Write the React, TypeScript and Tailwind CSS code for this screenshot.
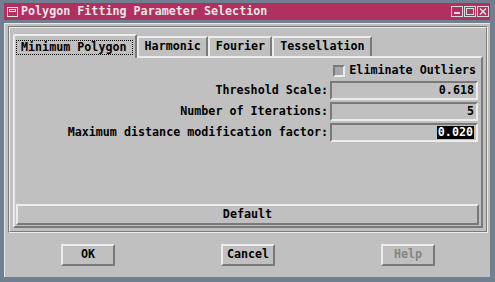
import React from 'react';

const raised = 'border-2 border-t-[#ececec] border-l-[#ececec] border-b-[#7a7a7a] border-r-[#7a7a7a]';
const sunken = 'border-2 border-t-[#7a7a7a] border-l-[#7a7a7a] border-b-[#ececec] border-r-[#ececec]';

const WinIcon = () => (
  <svg width="11" height="10" viewBox="0 0 11 10" className="shrink-0">
    <rect x="0.5" y="0.5" width="10" height="9" fill="none" stroke="#e4e4e4" />
    <rect x="2.5" y="2.5" width="6" height="2" fill="none" stroke="#e4e4e4" />
  </svg>
);

const TitleButton = ({ kind }: { kind: 'min' | 'max' | 'close' }) => (
  <svg width="12" height="11" viewBox="0 0 12 11">
    <rect x="0.5" y="0.5" width="11" height="10" fill="none" stroke="#dcdcdc" />
    {kind === 'min' && <rect x="3" y="6" width="6" height="2" fill="#dcdcdc" />}
    {kind === 'max' && <rect x="2.5" y="2.5" width="7" height="6" fill="none" stroke="#dcdcdc" strokeWidth="1" />}
    {kind === 'close' && (
      <path d="M3 2.5 L9 8.5 M9 2.5 L3 8.5" stroke="#dcdcdc" strokeWidth="1.6" />
    )}
  </svg>
);

const tabs = ['Minimum Polygon', 'Harmonic', 'Fourier', 'Tessellation'];

const rows = [
  { label: 'Threshold Scale:', value: '0.618' },
  { label: 'Number of Iterations:', value: '5' },
  { label: 'Maximum distance modification factor:', value: '0.020', selected: true },
];

export default function App() {
  return (
    <div className="w-[495px] h-[282px] bg-[#708090] pt-[3px] pl-[4px] pr-[5px] pb-[5px] flex flex-col font-['DejaVu_Sans_Mono','Liberation_Mono',monospace] text-[11.7px] font-bold leading-none text-black">
      {/* title bar */}
      <div className="h-[17px] bg-[#b03060] flex items-center pl-[3px] pr-[1px] gap-[3px]">
        <WinIcon />
        <span className="text-[#e6e6e6] flex-1">Polygon Fitting Parameter Selection</span>
        <div className="flex gap-[1px]">
          <TitleButton kind="min" />
          <TitleButton kind="max" />
          <TitleButton kind="close" />
        </div>
      </div>

      {/* body */}
      <div className="mt-[3px] flex-1 bg-[#c0c0c0] border-t border-l border-t-[#e8e8e8] border-l-[#e8e8e8] flex flex-col">
        <div className="mt-[2px] ml-[3px] mr-[2px] h-[207px] border border-t-[#7a7a7a] border-l-[#7a7a7a] border-b-[#ececec] border-r-[#ececec]">
          <div className="h-full border border-t-[#ececec] border-l-[#ececec] border-b-[#7a7a7a] border-r-[#7a7a7a] pt-[6px] pl-[3px] pr-[3px] pb-[3px] flex flex-col">
            {/* tabs */}
            <div className="flex items-end h-[22px]">
              {tabs.map((t, i) =>
                i === 0 ? (
                  <div
                    key={t}
                    className="relative z-10 h-[24px] -mb-[2px] bg-[#c0c0c0] border-t-2 border-l-2 border-r-2 border-t-[#ececec] border-l-[#ececec] border-r-[#7a7a7a] rounded-tl-[2px] pl-[1px] pr-[2px] pt-[4px]"
                  >
                    <div className="border border-dotted border-black h-[15px] pl-[4px] pr-[5px] flex items-center">{t}</div>
                  </div>
                ) : (
                  <div
                    key={t}
                    className="h-[20px] border-t-2 border-l-2 border-r-2 border-t-[#ececec] border-l-[#ececec] border-r-[#7a7a7a] rounded-tl-[2px] pl-[6px] pr-[5px] flex items-center"
                  >
                    {t}
                  </div>
                )
              )}
            </div>

            {/* panel */}
            <div className={`flex-1 ${raised} bg-[#c0c0c0] flex flex-col pt-[5px]`}>
              <div className="h-[16px] flex items-center justify-end pr-[5px] gap-[4px]">
                <div className={`w-[12px] h-[12px] ${sunken} bg-[#a8a8a8]`} />
                <span>Eliminate Outliers</span>
              </div>
              <div className="mt-[2px] grid grid-cols-[1fr_148px] gap-x-[2px] gap-y-[2px] pr-[3px]">
                {rows.map((r) => (
                  <React.Fragment key={r.label}>
                    <div className="h-[19px] flex items-center justify-end">{r.label}</div>
                    <div className={`h-[19px] ${sunken} flex items-center justify-end pr-[2px]`}>
                      {r.selected ? (
                        <span className="bg-black text-white h-[13px] flex items-center px-[1px]">{r.value}</span>
                      ) : (
                        <span>{r.value}</span>
                      )}
                    </div>
                  </React.Fragment>
                ))}
              </div>
              <div className={`mt-auto ml-[1px] mr-[2px] mb-[1px] h-[21px] ${raised} flex items-center justify-center`}>
                Default
              </div>
            </div>
          </div>
        </div>

        {/* bottom buttons */}
        <div className="flex-1 grid grid-cols-3 items-center pl-[3px] pr-[2px]">
          <div className={`justify-self-center w-[54px] h-[22px] ${raised} flex items-center justify-center`}>OK</div>
          <div className={`justify-self-center w-[54px] h-[22px] ${raised} flex items-center justify-center`}>Cancel</div>
          <div className={`justify-self-center w-[54px] h-[22px] ${raised} flex items-center justify-center text-[#858585]`}>Help</div>
        </div>
      </div>
    </div>
  );
}
